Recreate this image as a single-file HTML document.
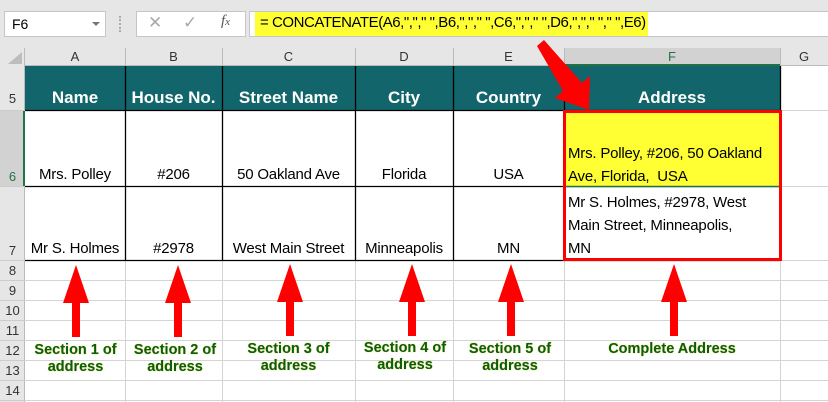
<!DOCTYPE html>
<html><head><meta charset="utf-8"><style>
body{margin:0;width:828px;height:402px;overflow:hidden;background:#fff;font-family:"Liberation Sans",sans-serif;position:relative}
.a{position:absolute;box-sizing:border-box}
.t{font-size:15px;color:#000;text-align:center;white-space:nowrap;letter-spacing:-0.2px}
.h{color:#fff;font-weight:bold;font-size:17px;text-align:center;white-space:nowrap}
.rh{font-size:13px;color:#333;text-align:center;width:25px;left:0}
.ch{font-size:13px;color:#333;text-align:center;top:48px;height:18px;line-height:18px}
.g{color:#0b5e0b;font-weight:bold;font-size:14.5px;text-align:center;line-height:17px;text-shadow:0 0 1px #c9c000}
</style></head><body>
<div class="a" style="left:0;top:0;width:828px;height:48px;background:#e6e6e6"></div>
<div class="a" style="left:4px;top:11px;width:102px;height:26px;background:#fff;border:1px solid #c6c6c6;font-size:14px;line-height:24px;padding-left:7px">F6</div>
<div class="a" style="left:92px;top:22px;width:0;height:0;border-left:4px solid transparent;border-right:4px solid transparent;border-top:4px solid #777"></div>
<div class="a" style="left:119px;top:16px;width:2px;height:16px;border-left:2px dotted #aaa"></div>
<div class="a" style="left:136px;top:11px;width:110px;height:26px;background:#fff;border:1px solid #c6c6c6"></div>
<div class="a" style="left:148px;top:13px;font-size:17px;color:#aaa">✕</div>
<div class="a" style="left:183px;top:13px;font-size:17px;color:#aaa">✓</div>
<div class="a" style="left:221px;top:13px;font-size:15px;color:#555;font-style:italic;font-family:'Liberation Serif',serif">f<span style="font-size:11px">x</span></div>
<div class="a" style="left:249px;top:11px;width:580px;height:26px;background:#fff;border:1px solid #c6c6c6"></div>
<div class="a" style="left:255px;top:12px;width:393px;height:24px;background:#ffff33"></div>
<div class="a" style="left:260px;top:14px;font-size:15px;white-space:nowrap;letter-spacing:-0.45px">= CONCATENATE(A6,","," ",B6,","," ",C6,","," ",D6,","," "," ",E6)</div>
<div class="a" style="left:0;top:48px;width:828px;height:18px;background:#e6e6e6;border-bottom:1px solid #bbb"></div>
<div class="a" style="left:0;top:48px;width:25px;height:354px;background:#e6e6e6;border-right:1px solid #bbb"></div>
<div class="a" style="left:564px;top:48px;width:216px;height:18px;background:#d2d2d2;border-bottom:2px solid #217346"></div>
<div class="a" style="left:0;top:110px;width:25px;height:76px;background:#d2d2d2;border-right:2px solid #217346"></div>
<div class="a" style="left:8px;top:52px;width:0;height:0;border-left:14px solid transparent;border-bottom:12px solid #bdbdbd"></div>
<div class="a ch" style="left:25px;width:100px">A</div>
<div class="a ch" style="left:125px;width:97px">B</div>
<div class="a ch" style="left:222px;width:133px">C</div>
<div class="a ch" style="left:355px;width:98px">D</div>
<div class="a ch" style="left:453px;width:111px">E</div>
<div class="a ch" style="left:564px;width:216px;color:#217346">F</div>
<div class="a ch" style="left:780px;width:48px">G</div>
<div class="a" style="left:125px;top:48px;width:1px;height:18px;background:#bbb"></div>
<div class="a" style="left:222px;top:48px;width:1px;height:18px;background:#bbb"></div>
<div class="a" style="left:355px;top:48px;width:1px;height:18px;background:#bbb"></div>
<div class="a" style="left:453px;top:48px;width:1px;height:18px;background:#bbb"></div>
<div class="a" style="left:564px;top:48px;width:1px;height:18px;background:#bbb"></div>
<div class="a" style="left:780px;top:48px;width:1px;height:18px;background:#bbb"></div>
<div class="a rh" style="top:91px">5</div>
<div class="a rh" style="top:169px;color:#217346">6</div>
<div class="a rh" style="top:243px">7</div>
<div class="a rh" style="top:263px">8</div>
<div class="a rh" style="top:283px">9</div>
<div class="a rh" style="top:303px">10</div>
<div class="a rh" style="top:323px">11</div>
<div class="a rh" style="top:343px">12</div>
<div class="a rh" style="top:363px">13</div>
<div class="a rh" style="top:383px">14</div>
<svg class="a" style="left:0;top:0" width="828" height="402">
<g stroke="#d4d4d4" stroke-width="1">
<line x1="25" y1="280.5" x2="828" y2="280.5"/><line x1="25" y1="300.5" x2="828" y2="300.5"/>
<line x1="25" y1="320.5" x2="828" y2="320.5"/><line x1="25" y1="340.5" x2="828" y2="340.5"/>
<line x1="25" y1="360.5" x2="828" y2="360.5"/><line x1="25" y1="380.5" x2="828" y2="380.5"/>
<line x1="25" y1="400.5" x2="828" y2="400.5"/>
<line x1="125.5" y1="260" x2="125.5" y2="402"/><line x1="222.5" y1="260" x2="222.5" y2="402"/>
<line x1="355.5" y1="260" x2="355.5" y2="402"/><line x1="453.5" y1="260" x2="453.5" y2="402"/>
<line x1="564.5" y1="260" x2="564.5" y2="402"/><line x1="780.5" y1="66" x2="780.5" y2="402"/>
<line x1="780" y1="110.5" x2="828" y2="110.5"/><line x1="780" y1="186.5" x2="828" y2="186.5"/>
<line x1="780" y1="260.5" x2="828" y2="260.5"/>
<g stroke="#ccc"><line x1="0" y1="110.5" x2="25" y2="110.5"/><line x1="0" y1="186.5" x2="25" y2="186.5"/><line x1="0" y1="260.5" x2="25" y2="260.5"/>
<line x1="0" y1="280.5" x2="25" y2="280.5"/><line x1="0" y1="300.5" x2="25" y2="300.5"/><line x1="0" y1="320.5" x2="25" y2="320.5"/><line x1="0" y1="340.5" x2="25" y2="340.5"/><line x1="0" y1="360.5" x2="25" y2="360.5"/><line x1="0" y1="380.5" x2="25" y2="380.5"/><line x1="0" y1="400.5" x2="25" y2="400.5"/></g>
</g>
<rect x="25" y="66" width="755" height="44" fill="#12666b"/>
<g stroke="#000" stroke-width="1.3">
<line x1="25" y1="110.5" x2="780" y2="110.5"/><line x1="25" y1="186.5" x2="780" y2="186.5"/><line x1="25" y1="260.5" x2="780" y2="260.5"/>
<line x1="125.5" y1="66" x2="125.5" y2="260"/><line x1="222.5" y1="66" x2="222.5" y2="260"/>
<line x1="355.5" y1="66" x2="355.5" y2="260"/><line x1="453.5" y1="66" x2="453.5" y2="260"/>
<line x1="564.5" y1="66" x2="564.5" y2="260"/><line x1="780.5" y1="66" x2="780.5" y2="260"/>
</g>
<rect x="565" y="112" width="214" height="74" fill="#ffff33"/>
<line x1="565" y1="186.5" x2="779" y2="186.5" stroke="#217346" stroke-width="1.5"/>
<rect x="564.5" y="111.5" width="216" height="148" fill="none" stroke="#f00" stroke-width="3"/>
<g fill="#f00">
<path d="M76 265 L89 303 L80 303 L80 337 L72 337 L72 303 L63 303Z"/>
<path d="M178 265 L191 303 L182 303 L182 337 L174 337 L174 303 L165 303Z"/>
<path d="M290 264 L303 302 L294 302 L294 336 L286 336 L286 302 L277 302Z"/>
<path d="M412 264 L425 302 L416 302 L416 336 L408 336 L408 302 L399 302Z"/>
<path d="M511 264 L524 302 L515 302 L515 336 L507 336 L507 302 L498 302Z"/>
<path d="M674 264 L687 302 L678 302 L678 336 L670 336 L670 302 L661 302Z"/>
<path d="M537 46 L544 40 L582 83 L590 76 L589 110 L555 98 L563 91 Z"/>
</g>
</svg>
<div class="a h" style="left:25px;top:88px;width:100px">Name</div>
<div class="a h" style="left:125px;top:88px;width:97px">House No.</div>
<div class="a h" style="left:222px;top:88px;width:133px">Street Name</div>
<div class="a h" style="left:355px;top:88px;width:98px">City</div>
<div class="a h" style="left:453px;top:88px;width:111px">Country</div>
<div class="a h" style="left:564px;top:88px;width:216px">Address</div>
<div class="a t" style="left:25px;top:166px;width:100px">Mrs. Polley</div>
<div class="a t" style="left:125px;top:166px;width:97px">#206</div>
<div class="a t" style="left:222px;top:166px;width:133px">50 Oakland Ave</div>
<div class="a t" style="left:355px;top:166px;width:98px">Florida</div>
<div class="a t" style="left:453px;top:166px;width:111px">USA</div>
<div class="a t" style="left:25px;top:240px;width:100px">Mr S. Holmes</div>
<div class="a t" style="left:125px;top:240px;width:97px">#2978</div>
<div class="a t" style="left:222px;top:240px;width:133px">West Main Street</div>
<div class="a t" style="left:355px;top:240px;width:98px">Minneapolis</div>
<div class="a t" style="left:453px;top:240px;width:111px">MN</div>
<div class="a t" style="left:568px;top:142px;text-align:left;line-height:23px">Mrs. Polley, #206, 50 Oakland<br>Ave, Florida,&nbsp; USA</div>
<div class="a t" style="left:568px;top:191px;text-align:left;line-height:23px">Mr S. Holmes, #2978, West<br>Main Street, Minneapolis,<br>MN</div>
<div class="a g" style="left:25px;top:342px;width:101px">Section 1 of<br>address</div>
<div class="a g" style="left:125px;top:342px;width:100px">Section 2 of<br>address</div>
<div class="a g" style="left:222px;top:341px;width:133px">Section 3 of<br>address</div>
<div class="a g" style="left:355px;top:340px;width:100px">Section 4 of<br>address</div>
<div class="a g" style="left:453px;top:341px;width:114px">Section 5 of<br>address</div>
<div class="a g" style="left:564px;top:341px;width:216px">Complete Address</div>
</body></html>
